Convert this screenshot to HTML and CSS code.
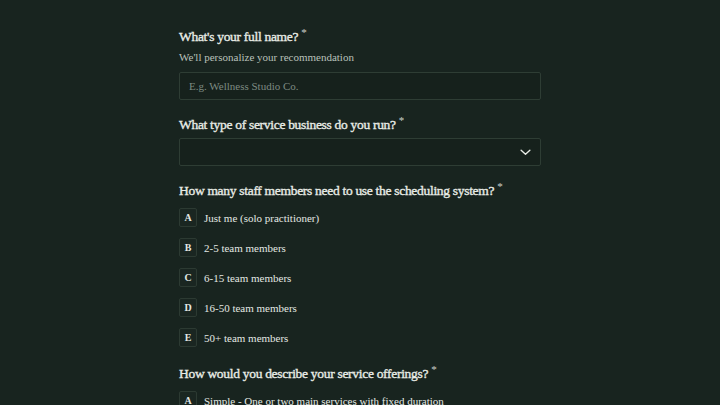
FILE: index.html
```html
<!DOCTYPE html>
<html lang="en">

<head>
  <meta charset="UTF-8">
  <meta name="viewport" content="width=device-width, initial-scale=1.0">
  <title>Scheduling Quiz</title>
  <link rel="stylesheet" href="styles.css">
</head>

<body>
  <main class="form">
    <section class="field">
      <h2 class="question">What's your full name?<span class="req">*</span></h2>
      <p class="hint">We'll personalize your recommendation</p>
      <input class="text-input" type="text" placeholder="E.g. Wellness Studio Co.">
    </section>

    <section class="field">
      <h2 class="question">What type of service business do you run?<span class="req">*</span></h2>
      <div class="select">
        <svg class="chevron" viewBox="0 0 12 8" width="11" height="7">
          <path d="M1 1.5 L6 6 L11 1.5" fill="none" stroke="#e8ece6" stroke-width="1.6" stroke-linecap="round" stroke-linejoin="round" />
        </svg>
      </div>
    </section>

    <section class="field">
      <h2 class="question">How many staff members need to use the scheduling system?<span class="req">*</span></h2>
      <ul class="options">
        <li class="option"><span class="key">A</span>Just me (solo practitioner)</li>
        <li class="option"><span class="key">B</span>2-5 team members</li>
        <li class="option"><span class="key">C</span>6-15 team members</li>
        <li class="option"><span class="key">D</span>16-50 team members</li>
        <li class="option"><span class="key">E</span>50+ team members</li>
      </ul>
    </section>

    <section class="field">
      <h2 class="question">How would you describe your service offerings?<span class="req">*</span></h2>
      <ul class="options">
        <li class="option"><span class="key">A</span>Simple - One or two main services with fixed duration</li>
      </ul>
    </section>
  </main>
</body>

</html>
```

FILE: styles.css
```css
*,
*::before,
*::after {
  box-sizing: border-box;
}

body {
  font-family: 'Liberation Serif', 'DejaVu Serif', serif;
  background: #18241f;
  color: #e8ece6;
  margin: 0;
  padding: 0;
}

.form {
  width: 362px;
  margin: 0 auto;
  padding-top: 23px;
  display: flex;
  flex-direction: column;
  gap: 11px;
}

.field {
  display: flex;
  flex-direction: column;
}

.question {
  font-size: 13.5px;
  font-weight: 400;
  -webkit-text-stroke: 0.35px #e8ece6;
  margin: 0 0 4px;
  line-height: 18px;
  letter-spacing: -0.3px;
  white-space: nowrap;

  .req {
    font-size: 11px;
    -webkit-text-stroke: 0;
    vertical-align: 5px;
    margin-left: 3px;
    opacity: .85;
  }
}

.hint {
  font-size: 11px;
  color: #b9c1bb;
  margin: -1px 0 7px;
  line-height: 16px;
}

.text-input {
  height: 28px;
  width: 100%;
  background: #16211c;
  border: 1px solid #2e3d34;
  border-radius: 2px;
  color: #e8ece6;
  font-family: inherit;
  font-size: 11px;
  padding: 0 9px;
  outline: none;

  &::placeholder {
    color: #7d8a82;
  }
}

.select {
  height: 28px;
  background: #16211c;
  border: 1px solid #2e3d34;
  border-radius: 2px;
  display: flex;
  align-items: center;
  justify-content: flex-end;
  padding-right: 9px;
}

.options {
  list-style: none;
  margin: 0 0 2px;
  padding: 4px 0 0;
  display: flex;
  flex-direction: column;
  gap: 11px;
}

.option {
  display: flex;
  align-items: center;
  gap: 7px;
  font-size: 11px;
  color: #e3e8e3;
  height: 19px;

  .key {
    width: 18px;
    height: 19px;
    border: 1px solid #2c3a32;
    background: #1a2621;
    border-radius: 2px;
    display: flex;
    justify-content: center;
    align-items: center;
    font-size: 10px;
    font-weight: 700;
  }
}
```
